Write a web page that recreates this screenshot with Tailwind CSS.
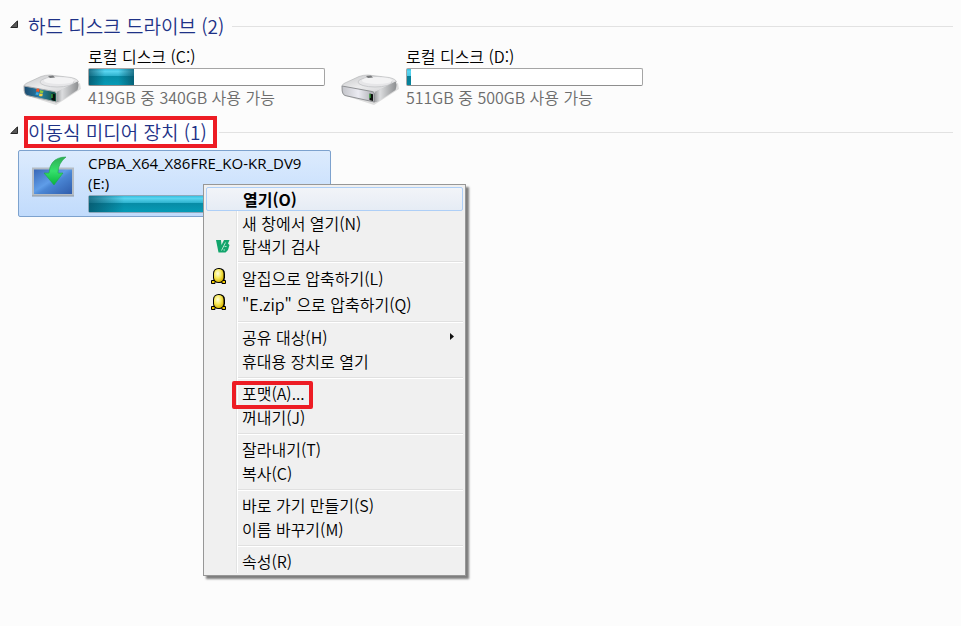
<!DOCTYPE html>
<html lang="ko">
  <head>
    <meta charset="UTF-8">
    <meta name="viewport" content="width=device-width, initial-scale=1.0">
    <title>컴퓨터</title>
    <script src="https://cdn.jsdelivr.net/npm/@tailwindcss/browser@4"></script>
  </head>
  <body class="bg-[#fcfcfc] min-h-screen font-['Noto_Sans_CJK_KR',sans-serif] font-[350] text-base leading-5 text-black">
    <!-- shared drawings -->
    <svg class="absolute w-0 h-0" aria-hidden="true">
      <defs>
        <linearGradient id="top" x1="0" y1="0" x2="1" y2="1">
          <stop offset="0" stop-color="#c4c5c7"/><stop offset=".5" stop-color="#ececed"/><stop offset="1" stop-color="#d0d1d3"/>
        </linearGradient>
        <linearGradient id="side" x1="0" y1="0" x2="1" y2="0">
          <stop offset="0" stop-color="#8b8d8f"/><stop offset=".3" stop-color="#dcdddf"/><stop offset="1" stop-color="#8c8e90"/>
        </linearGradient>
        <linearGradient id="blue" x1="0" y1="0" x2="1" y2="0">
          <stop offset="0" stop-color="#1c4a6e"/><stop offset=".5" stop-color="#2b7fa6"/><stop offset="1" stop-color="#0d4f3c"/>
        </linearGradient>
        <linearGradient id="grey" x1="0" y1="0" x2="1" y2="0">
          <stop offset="0" stop-color="#c3c4c9"/><stop offset=".5" stop-color="#ebebf2"/><stop offset="1" stop-color="#a9aab0"/>
        </linearGradient>
        <linearGradient id="screen" x1="0" y1="0" x2="1" y2="1">
          <stop offset="0" stop-color="#3563b4"/><stop offset=".45" stop-color="#5f9de8"/><stop offset=".55" stop-color="#4a86d4"/><stop offset="1" stop-color="#2d59a8"/>
        </linearGradient>
        <linearGradient id="arrow" x1="0" y1="0" x2="0" y2="1">
          <stop offset="0" stop-color="#2fae55"/><stop offset=".5" stop-color="#35e06c"/><stop offset="1" stop-color="#08b53c"/>
        </linearGradient>
        <radialGradient id="egg" cx=".4" cy=".35" r=".7">
          <stop offset="0" stop-color="#fffde0"/><stop offset=".5" stop-color="#f7ea5c"/><stop offset="1" stop-color="#d9b400"/>
        </radialGradient>
        <symbol id="drive" viewBox="0 0 60 36">
          <path d="M2 25 L33 35 L58 19 L57 13 L33 24 Z" fill="#000" opacity=".12"/>
          <path d="M1 15.500 Q2 13.500 5 12.500 L18 6.500 Q22 5 27 5 L48 7.500 Q55 9 55.500 12 L36 21.500 Q34 22.500 31 22 L3 17.500 Z" fill="url(#top)" stroke="#aeb0b2" stroke-width=".6"/>
          <ellipse cx="34" cy="12" rx="17" ry="5" fill="#e6e6e8" stroke="#c2c3c5" stroke-width=".8"/>
          <ellipse cx="36" cy="10.500" rx="15" ry="3.600" fill="#f3f3f4"/>
          <path d="M25 6 L30 5.500 L32 7.500 L27 8 Z" fill="#77797b"/>
          <path d="M34 22 L54.500 11.500 Q56.500 14 54.500 20 L38 31 Q34 33 32 32 Z" fill="url(#side)"/>
        </symbol>
        <symbol id="alzip" viewBox="0 0 16 18">
          <rect x="3" y="1" width="12" height="15" rx="5.500" fill="#000"/>
          <path d="M1.500 13.500 H5 V16.500 H1.500 Z M12 13.500 H15.500 V16.500 H12 Z" fill="#f0c800" stroke="#000"/>
          <rect x="4" y="2" width="9.500" height="13" rx="4.600" fill="url(#egg)"/>
        </symbol>
      </defs>
    </svg>

    <main class="pl-2.5 pr-2 pt-3">
      <section>
        <h2 class="flex items-center h-7 gap-2 text-[19px] text-[#1e3287]">
          <button type="button" class="flex items-center gap-2.5" aria-expanded="true">
            <svg class="w-2 h-2 mb-1" viewBox="0 0 8 8"><path d="M7.500 .8 V7.500 H.8 Z" fill="#595959" stroke="#262626"/></svg>
            하드 디스크 드라이브 (2)
          </button>
          <span class="flex-1 h-px bg-[#e2e2e2]"></span>
        </h2>
        <div class="flex flex-wrap gap-x-[5px] pl-2 pt-[3px]">
          <a href="#c" class="flex w-[313px] h-[67px] border border-transparent pl-1 pt-0.5">
            <svg class="w-[60px] h-9 mt-6 shrink-0" viewBox="0 0 60 36">
              <use href="#drive"/>
              <path d="M1 16 L31 21.500 Q33.500 22 33.500 24 V32 L4 25.500 Q1.500 24.500 1.200 21 Z" fill="url(#blue)" stroke="#a9abad"/>
              <path d="M28.500 23.500 L32 24.200 V31 L28.500 30 Z" fill="#0b0f0c"/><path d="M29 24 V28" stroke="#46d848"/>
              <path d="M13.500 19 Q15.500 18 16.500 19.500 L16 22 Q14.500 21 13 21.700 Z" fill="#f0562a"/>
              <path d="M17.200 20 Q19 21 20.500 20.500 L20 23 Q18 23.500 16.700 22.500 Z" fill="#8cc63e"/>
              <path d="M13 22.400 Q14.500 21.800 15.800 22.800 L15.300 25.300 Q13.800 24.300 12.500 25 Z" fill="#39a9e8"/>
              <path d="M16.500 23.200 Q18 24.200 19.800 23.700 L19.300 26.200 Q17.500 26.700 16 25.700 Z" fill="#fbd03b"/>
            </svg>
            <span class="flex-1 ml-[5px] mr-[5px]">
              <span class="block">로컬 디스크 (C:)</span>
              <span class="flex h-[18px] mt-0.5 rounded-xs border border-[#a5a5a5] border-b-[#8e8e8e] bg-white">
                <span class="w-[45px] bg-[linear-gradient(90deg,#064a5fb0,transparent_35%,transparent_65%,#064a5fb0),linear-gradient(#36bfe0,#5ad5f0_15%,#2fb3cf_42%,#078ba5_44%,#069bb6)]"></span>
              </span>
              <span class="block mt-px text-[#6d6d6d]">419GB 중 340GB 사용 가능</span>
            </span>
          </a>
          <a href="#d" class="flex w-[313px] h-[67px] border border-transparent pl-1 pt-0.5">
            <svg class="w-[60px] h-9 mt-6 shrink-0" viewBox="0 0 60 36">
              <use href="#drive"/>
              <path d="M1 16 L31 21.500 Q33.500 22 33.500 24 V32 L4 25.500 Q1.500 24.500 1.200 21 Z" fill="url(#grey)" stroke="#8f9194"/>
              <path d="M28.500 23.500 L32 24.200 V31 L28.500 30 Z" fill="#0b0f0c"/><path d="M29 24 V28" stroke="#46d848"/>
            </svg>
            <span class="flex-1 ml-[5px] mr-[5px]">
              <span class="block">로컬 디스크 (D:)</span>
              <span class="flex h-[18px] mt-0.5 rounded-xs border border-[#a5a5a5] border-b-[#8e8e8e] bg-white">
                <span class="w-1 bg-[linear-gradient(#36bfe0,#5ad5f0_15%,#4cc9e6_42%,#077b93_44%,#06859d)]"></span>
              </span>
              <span class="block mt-px text-[#6d6d6d]">511GB 중 500GB 사용 가능</span>
            </span>
          </a>
        </div>
      </section>

      <section class="pt-1.5">
        <h2 class="flex items-center h-8 gap-0.5 text-[19px] text-[#1e3287]">
          <button type="button" class="flex items-center gap-1.5" aria-expanded="true">
            <svg class="w-2 h-2 mb-1" viewBox="0 0 8 8"><path d="M7.500 .8 V7.500 H.8 Z" fill="#595959" stroke="#262626"/></svg>
            <span class="flex items-center h-8 w-[193px] border-4 border-[#ed1c24] bg-white whitespace-nowrap">이동식 미디어 장치 (1)</span>
          </button>
          <span class="flex-1 h-px bg-[#e2e2e2]"></span>
        </h2>
        <div class="pl-2 pt-0.5">
          <a href="#e" class="flex w-[313px] h-[67px] pl-1 pt-0.5 rounded-xs border border-[#7da2ce] bg-linear-to-b from-[#dcebfd] to-[#c1dbfc]">
            <svg class="w-[60px] h-[50px] shrink-0" viewBox="0 0 60 50">
              <path d="M10 15.500 H50 V42 H10 Z" fill="url(#screen)" stroke="#b4bcc4" stroke-width="2"/>
              <path d="M9 43 H51" stroke="#8c98a4"/>
              <path d="M43 4 Q34 4 29.500 9.500 Q26.500 13 26 20 H21 L31 32 L40 20 H35 Q35 10 43 4 Z" fill="url(#arrow)" stroke="#22a34b" stroke-width=".6"/>
            </svg>
            <span class="flex-1 ml-[5px] mr-[5px]">
              <span class="block font-['Open_Sans',sans-serif] font-normal text-[15px] leading-5">CPBA_X64_X86FRE_KO-KR_DV9<br>(E:)</span>
              <span class="flex h-[18px] mt-0.5 rounded-xs border border-[#8ea9bd] bg-white">
                <span class="flex-1 bg-[linear-gradient(90deg,#064a5fb0,transparent_15%,transparent_85%,#064a5fb0),linear-gradient(#36bfe0,#5ad5f0_15%,#2fb3cf_42%,#078ba5_44%,#069bb6)]"></span>
              </span>
            </span>
          </a>
        </div>
      </section>
    </main>

    <!-- context menu -->
    <div role="menu" class="absolute left-[203px] top-[184px] w-[263px] p-0.5 border border-[#979797] bg-[#f0f0f0] shadow-[3px_3px_2px_#00000080]">
      <div class="absolute left-8 top-0.5 bottom-0.5 w-0.5 border-l border-[#e2e3e3] bg-white"></div>
      <div class="relative flex flex-col">
        <button type="button" role="menuitem" class="flex items-center h-6 pl-9 rounded-xs border border-[#aecff7] bg-linear-to-b from-[#f2f4f8] to-[#e6ecf5] font-bold">열기(O)</button>
        <button type="button" role="menuitem" class="flex items-center h-6 pl-9">새 창에서 열기(N)</button>
        <button type="button" role="menuitem" class="flex items-center h-[22px] pl-2.5">
          <svg class="w-3.5 h-3.5 mr-3" viewBox="0 0 14 14">
            <path d="M0 1 H5 L5.500 6 L8 1 H13.500 L12 4.500 L13.500 6 L12 11 L9.500 13.500 H2.500 Z" fill="#12a56c"/>
            <path d="M5.500 11.500 L9.500 3.500 M8.500 7.500 H10.500 M7.500 11 H9" fill="none" stroke="#d8f5e8" stroke-width=".8"/>
          </svg>
          탐색기 검사
        </button>
        <div role="separator" class="h-2 pt-1 ml-8"><div class="h-0.5 border-t border-[#e0e0e0] bg-white"></div></div>
        <button type="button" role="menuitem" class="flex items-center h-[26px] pl-1">
          <svg class="w-4 h-[18px] mr-4 mb-1"><use href="#alzip"/></svg>
          알집으로 압축하기(L)
        </button>
        <button type="button" role="menuitem" class="flex items-center h-[26px] pl-1">
          <svg class="w-4 h-[18px] mr-4 mb-1"><use href="#alzip"/></svg>
          "E.zip" 으로 압축하기(Q)
        </button>
        <div role="separator" class="h-2 pt-1 ml-8"><div class="h-0.5 border-t border-[#e0e0e0] bg-white"></div></div>
        <button type="button" role="menuitem" aria-haspopup="menu" class="flex items-center justify-between h-6 pl-9 pr-[9px]">
          공유 대상(H)
          <svg class="w-1 h-[7px] mb-0.5" viewBox="0 0 4 7"><path d="M0 0 L4 3.500 L0 7 Z" fill="#111"/></svg>
        </button>
        <button type="button" role="menuitem" class="flex items-center h-6 pl-9">휴대용 장치로 열기</button>
        <div role="separator" class="h-2 pt-1 ml-8"><div class="h-0.5 border-t border-[#e0e0e0] bg-white"></div></div>
        <button type="button" role="menuitem" class="relative flex items-center h-6 pl-9">
          포맷(A)...
          <span class="absolute left-[26px] top-0 w-[81px] h-7 border-4 border-[#ed1c24] rounded-xs"></span>
        </button>
        <button type="button" role="menuitem" class="flex items-center h-6 pl-9">꺼내기(J)</button>
        <div role="separator" class="h-2 pt-1 ml-8"><div class="h-0.5 border-t border-[#e0e0e0] bg-white"></div></div>
        <button type="button" role="menuitem" class="flex items-center h-6 pl-9">잘라내기(T)</button>
        <button type="button" role="menuitem" class="flex items-center h-6 pl-9">복사(C)</button>
        <div role="separator" class="h-2 pt-1 ml-8"><div class="h-0.5 border-t border-[#e0e0e0] bg-white"></div></div>
        <button type="button" role="menuitem" class="flex items-center h-6 pl-9">바로 가기 만들기(S)</button>
        <button type="button" role="menuitem" class="flex items-center h-6 pl-9">이름 바꾸기(M)</button>
        <div role="separator" class="h-2 pt-1 ml-8"><div class="h-0.5 border-t border-[#e0e0e0] bg-white"></div></div>
        <button type="button" role="menuitem" class="flex items-center h-6 pl-9">속성(R)</button>
      </div>
    </div>
  </body>
</html>
